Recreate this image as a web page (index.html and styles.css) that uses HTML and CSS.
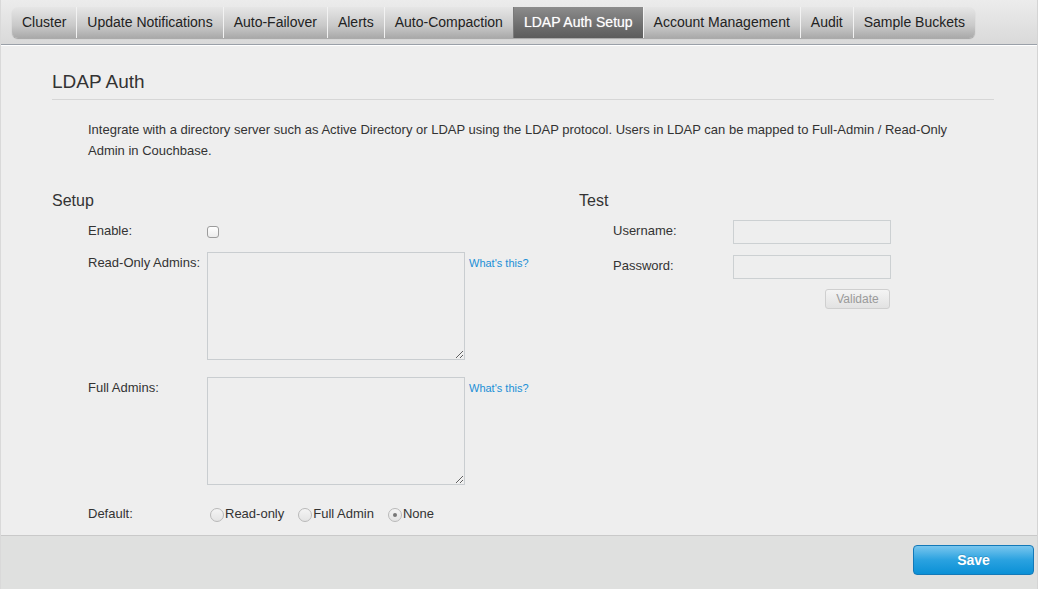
FILE: index.html
```html
<!DOCTYPE html>
<html>
<head>
<meta charset="utf-8">
<link rel="stylesheet" href="styles.css">
</head>
<body>
<div class="page">
  <div class="header">
    <ul class="tabs">
      <li class="tab">Cluster</li>
      <li class="tab">Update Notifications</li>
      <li class="tab">Auto-Failover</li>
      <li class="tab">Alerts</li>
      <li class="tab">Auto-Compaction</li>
      <li class="tab active">LDAP Auth Setup</li>
      <li class="tab">Account Management</li>
      <li class="tab">Audit</li>
      <li class="tab">Sample Buckets</li>
    </ul>
  </div>
  <div class="main">
    <h2 class="title">LDAP Auth</h2>
    <p class="intro">Integrate with a directory server such as Active Directory or LDAP using the LDAP protocol. Users in LDAP can be mapped to Full-Admin / Read-Only Admin in Couchbase.</p>
    <div class="columns">
      <div class="setup">
        <h3 class="section">Setup</h3>
        <div class="row row-check">
          <label class="label">Enable:</label>
          <input type="checkbox" class="check">
        </div>
        <div class="row row-area">
          <label class="label">Read-Only Admins:</label>
          <textarea class="area"></textarea>
          <a class="help">What's this?</a>
        </div>
        <div class="row row-area row-area2">
          <label class="label">Full Admins:</label>
          <textarea class="area"></textarea>
          <a class="help">What's this?</a>
        </div>
        <div class="row row-radio">
          <label class="label">Default:</label>
          <div class="radios">
            <label class="opt"><input type="radio" name="d" class="radio">Read-only</label>
            <label class="opt"><input type="radio" name="d" class="radio">Full Admin</label>
            <label class="opt"><input type="radio" name="d" class="radio" checked>None</label>
          </div>
        </div>
      </div>
      <div class="test">
        <h3 class="section">Test</h3>
        <div class="trow trow-first">
          <label class="tlabel">Username:</label>
          <input type="text" class="field">
        </div>
        <div class="trow">
          <label class="tlabel">Password:</label>
          <input type="password" class="field">
        </div>
        <div class="tactions">
          <button class="validate">Validate</button>
        </div>
      </div>
    </div>
  </div>
  <div class="footer">
    <button class="save">Save</button>
  </div>
</div>
</body>
</html>
```

FILE: styles.css
```css
* { box-sizing: border-box; }
html, body { margin: 0; padding: 0; }
body {
  background: #ffffff;
  font-family: "Liberation Sans", Arial, Helvetica, sans-serif;
  color: #333333;
  font-size: 13px;
}
.page {
  width: 1038px;
  height: 589px;
  border-left: 1px solid #d9d9d9;
  border-right: 1px solid #d4d4d4;
  background: #eeeeee;
  display: flex;
  flex-direction: column;
}
.header {
  height: 45px;
  flex: none;
  background: linear-gradient(#ececec, #d9d9d9);
  border-bottom: 1px solid #9aa0a8;
  box-shadow: 0 1px 0 #ffffff;
  padding: 7px 0 0 11px;
}
.tabs {
  list-style: none;
  margin: 0;
  padding: 0;
  display: flex;
  height: 31px;
  border-radius: 6px;
  box-shadow: 0 1px 1px rgba(0,0,0,0.25);
  width: max-content;
}
.tab {
  height: 31px;
  line-height: 30px;
  padding: 0 10px;
  font-size: 14px;
  color: #222;
  background: linear-gradient(#e6e6e6, #c9c9c9 60%, #a9a9a9);
  border-left: 1px solid #f2f2f2;
}
.tab:first-child { border-left: none; border-radius: 6px 0 0 6px; }
.tab:last-child { border-radius: 0 6px 6px 0; }
.tab.active {
  background: linear-gradient(#8c8c8c, #6e6e6e 60%, #5c5c5c);
  color: #fff;
  text-shadow: 0 0 1px rgba(255,255,255,0.6);
  border-left-color: #7a7a7a;
}
.main {
  flex: 1;
  padding: 25px 43px 0 51px;
}
.title {
  margin: 0;
  font-size: 19px;
  font-weight: normal;
  line-height: 24px;
  color: #333;
  padding-bottom: 5px;
  border-bottom: 1px solid #d6d6d6;
}
.intro {
  margin: 19px 0 0 0;
  padding: 0 30px 0 36px;
  line-height: 21px;
  font-size: 13px;
  color: #333;
}
.columns {
  display: flex;
  margin-top: 30px;
}
.setup { width: 527px; }
.test { flex: 1; }
.section {
  margin: 0;
  font-size: 16px;
  font-weight: normal;
  line-height: 20px;
  color: #333;
}
.row {
  display: flex;
  align-items: flex-start;
  padding-left: 36px;
}
.label {
  width: 119px;
  flex: none;
  line-height: 20px;
  font-size: 13px;
}
.row-check { margin-top: 10px; height: 20px; align-items: center; }
.check {
  -webkit-appearance: none;
  appearance: none;
  margin: 2px 0 0 0;
  width: 12px;
  height: 12px;
  border: 1px solid #9c9c9c;
  border-radius: 3px;
  background: linear-gradient(#ffffff, #ececec);
}
.row-area { margin-top: 11px; }
.row-area .label { padding-top: 1px; }
.row-area2 { margin-top: 17px; }
.area {
  width: 258px;
  height: 108px;
  margin: 0;
  border: 1px solid #c9cdd0;
  background: #eeeeee;
  resize: both;
  flex: none;
}
.help {
  margin-left: 4px;
  font-size: 11px;
  line-height: 20px;
  padding-top: 1px;
  color: #1a8fd6;
  cursor: pointer;
}
.row-radio { margin-top: 19px; align-items: center; height: 20px; }
.radios { display: flex; align-items: center; padding-left: 3px; }
.opt {
  display: flex;
  align-items: center;
  margin-right: 14px;
  line-height: 20px;
}
.radio {
  -webkit-appearance: none;
  appearance: none;
  margin: 1px 1px 0 0;
  width: 14px;
  height: 14px;
  border: 1px solid #b9b9b9;
  border-radius: 50%;
  background: linear-gradient(#f4f4f4, #e4e4e4);
  display: flex;
  align-items: center;
  justify-content: center;
}
.radio:checked::after {
  content: "";
  width: 4px;
  height: 4px;
  border-radius: 50%;
  background: #777;
}
.trow {
  display: flex;
  align-items: center;
  padding-left: 34px;
  margin-top: 11px;
}
.trow-first { margin-top: 9px; }
.tlabel { width: 120px; flex: none; margin-top: -3px; }
.field {
  width: 158px;
  height: 24px;
  margin: 0;
  border: 1px solid #ccd0d2;
  background: #eeeeee;
}
.tactions {
  width: 311px;
  display: flex;
  justify-content: flex-end;
  margin-top: 10px;
}
.validate {
  width: 65px;
  height: 20px;
  padding: 0;
  font-family: inherit;
  font-size: 12px;
  color: #9a9a9a;
  border: 1px solid #cfcfcf;
  border-radius: 3px;
  background: linear-gradient(#f4f4f4, #e2e2e2);
}
.footer {
  height: 54px;
  flex: none;
  border-top: 1px solid #c9c9c9;
  background: #dfe0df;
  display: flex;
  justify-content: flex-end;
  align-items: flex-start;
  padding: 9px 3px 0 0;
}
.save {
  width: 121px;
  height: 30px;
  border: 1px solid #1379b8;
  border-radius: 4px;
  background: linear-gradient(#79c6ee, #2aa2e0 50%, #0a90d6);
  color: #fff;
  font-family: inherit;
  font-weight: bold;
  font-size: 14px;
  text-shadow: 0 -1px 0 rgba(0,0,0,0.15);
}
```
